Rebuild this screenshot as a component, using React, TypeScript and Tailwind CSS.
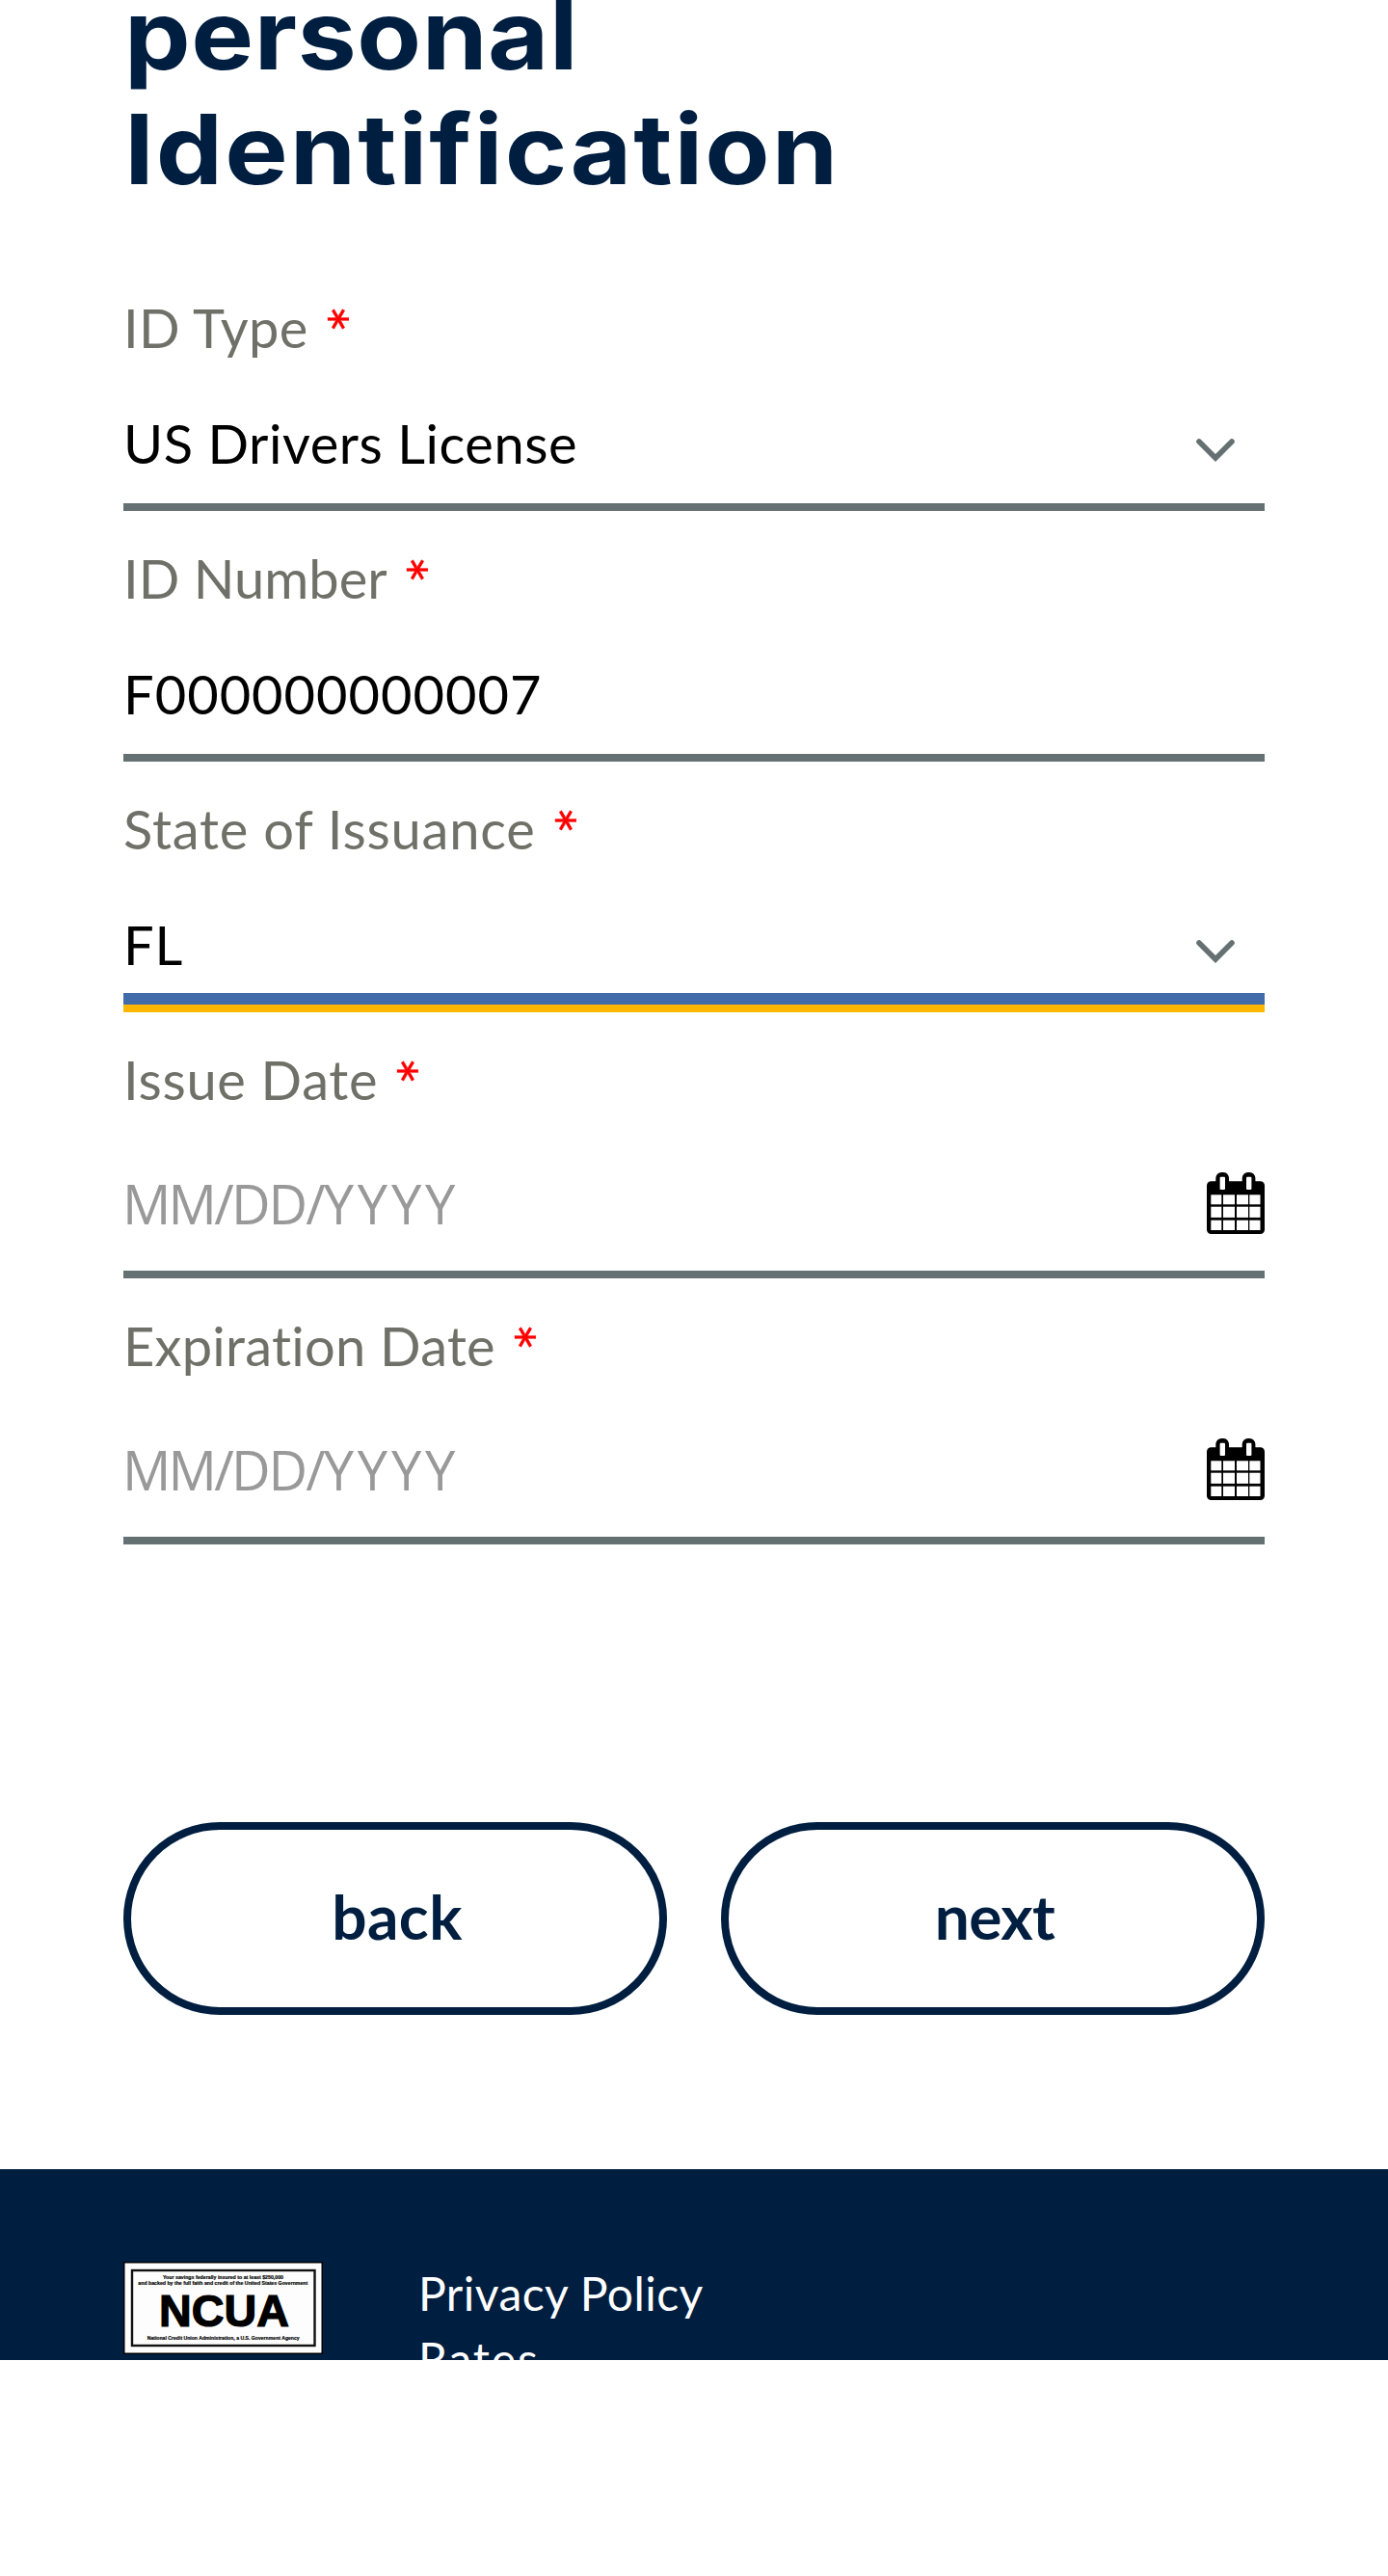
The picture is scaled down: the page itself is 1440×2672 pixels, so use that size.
import React from 'react'

function RequiredMark() {
  return (
    <span className="relative -top-1 ml-[18px] inline-flex h-6 w-6 rotate-90 items-center justify-center align-baseline">
      <span className="relative top-[13px] text-[68px] leading-6 text-[#ff0000] [-webkit-text-stroke:0.3px_#ff0000]">*</span>
    </span>
  )
}

function Label({ text, spacing }: { text: string; spacing: string }) {
  return (
    <label className="block h-32 pt-3 text-[56px] leading-[116px] whitespace-nowrap text-[#6f7169]">
      <span className={spacing}>{text}</span>
      <RequiredMark />
    </label>
  )
}

function Chevron() {
  return (
    <svg className="mt-[55px] mr-[31px] h-6 w-10 shrink-0" viewBox="0 0 40 24" fill="none">
      <path d="M3 3L20 20L37 3" stroke="#657072" strokeWidth="5.6" strokeLinecap="round" strokeLinejoin="miter" />
    </svg>
  )
}

function Calendar() {
  const columns = [
    [4.3, 11],
    [17, 12],
    [31, 12],
    [44.3, 11.2],
  ]
  const rows = [
    [23.3, 10],
    [35.7, 11.2],
    [49.7, 10.3],
  ]
  return (
    <svg className="h-16 w-[60px] shrink-0" viewBox="0 0 60 64">
      <rect x="0" y="9.3" width="60" height="54.7" rx="4.5" fill="#000" />
      <rect x="9.3" y="0" width="13.7" height="22" rx="6" fill="#000" />
      <rect x="36.7" y="0" width="13.7" height="22" rx="6" fill="#000" />
      <rect x="13.6" y="4.7" width="5.4" height="13.4" rx="1" fill="#fff" />
      <rect x="41" y="4.7" width="5.4" height="13.4" rx="1" fill="#fff" />
      {rows.map(([y, h]) =>
        columns.map(([x, w]) => <rect key={`${x}-${y}`} x={x} y={y} width={w} height={h} fill="#fff" />),
      )}
    </svg>
  )
}

function DateField({ label, spacing }: { label: string; spacing: string }) {
  return (
    <div className="h-[276px] shrink-0 border-b-8 border-[#657072]">
      <Label text={label} spacing={spacing} />
      <div className="flex items-center justify-between font-['Open_Sans',sans-serif] text-[56px] leading-[140px] text-[#999]">
        <span className="-ml-px tracking-[-2.8px]">
          MM/<span className="tracking-[-2px]">DD/</span>
          <span className="tracking-[3.8px]">YYYY</span>
        </span>
        <Calendar />
      </div>
    </div>
  )
}

function NcuaBadge() {
  return (
    <svg
      className="mt-24 h-24 w-[207px] shrink-0"
      viewBox="0 0 207 96"
      fontFamily="Liberation Sans, sans-serif"
      fontWeight="bold"
    >
      <rect x="0.75" y="0.75" width="205.5" height="94.5" fill="#fdfdfd" stroke="#000" strokeWidth="1.5" />
      <rect x="9" y="9" width="189.5" height="78" fill="none" stroke="#111" strokeWidth="2.4" />
      <text x="41" y="17.5" fontSize="6" stroke="#000" strokeWidth="0.2" textLength="125" lengthAdjust="spacingAndGlyphs">
        Your savings federally insured to at least $250,000
      </text>
      <text x="15.3" y="24.3" fontSize="6" stroke="#000" strokeWidth="0.2" textLength="176" lengthAdjust="spacingAndGlyphs">
        and backed by the full faith and credit of the United States Government
      </text>
      <text x="37" y="67" fontSize="46" stroke="#000" strokeWidth="1.2" textLength="135" lengthAdjust="spacingAndGlyphs">
        NCUA
      </text>
      <text x="24.7" y="81.3" fontSize="6" stroke="#000" strokeWidth="0.2" textLength="158" lengthAdjust="spacingAndGlyphs">
        National Credit Union Administration, a U.S. Government Agency
      </text>
    </svg>
  )
}

const buttonClass =
  'flex h-[200px] flex-1 items-center justify-center rounded-full border-8 border-[#001e40] pb-1 text-[64px] leading-none font-bold text-[#001e40]'

export default function App() {
  return (
    <div className="flex h-[2672px] w-[1440px] flex-col overflow-hidden bg-white font-['Lato',sans-serif]">
      <main className="flex h-[2250px] shrink-0 flex-col px-32">
        <h1 className="-mt-6 ml-px h-[294px] shrink-0 font-['Inter',sans-serif] text-[100px] leading-[119px] font-bold text-[#001e40]">
          <span className="block origin-left scale-x-[1.09] tracking-[0.5px]">personal</span>
          <span className="block origin-left scale-x-[1.1] tracking-[1.8px]">Identification</span>
        </h1>

        <div className="h-[260px] shrink-0 border-b-8 border-[#657072]">
          <Label text="ID Type" spacing="tracking-[0.38px]" />
          <div className="flex justify-between pt-0.5 text-[56px] leading-[120px] text-black">
            <span className="tracking-[0.55px]">US Drivers License</span>
            <Chevron />
          </div>
        </div>

        <div className="h-[260px] shrink-0 border-b-8 border-[#657072]">
          <Label text="ID Number" spacing="tracking-[0.03px]" />
          <div className="pt-0.5 text-[56px] leading-[120px] tracking-[1px] text-black">F000000000007</div>
        </div>

        <div className="flex h-[260px] shrink-0 flex-col border-b-8 border-[#ffb600]">
          <Label text="State of Issuance" spacing="tracking-[0.8px]" />
          <div className="flex h-28 justify-between pt-0.5 text-[56px] leading-[120px] text-black">
            <span className="tracking-[0.9px]">FL</span>
            <Chevron />
          </div>
          <div className="h-3 shrink-0 bg-[#426ba9]" />
        </div>

        <DateField label="Issue Date" spacing="tracking-[0.69px]" />
        <DateField label="Expiration Date" spacing="tracking-[0.25px]" />

        <div className="mt-72 flex gap-14">
          <button className={buttonClass}>
            <span className="pl-1 tracking-[0.42px]">back</span>
          </button>
          <button className={buttonClass}>
            <span className="pl-1 tracking-[-0.6px]">next</span>
          </button>
        </div>
      </main>

      <footer className="flex h-[198px] shrink-0 overflow-hidden bg-[#001e40] px-32">
        <NcuaBadge />
        <nav className="mt-[95px] ml-[99px] flex flex-col text-[48px] leading-[68px] text-white">
          <a className="tracking-[0.45px]">Privacy Policy</a>
          <a className="tracking-[1.8px]">Rates</a>
        </nav>
      </footer>
    </div>
  )
}
